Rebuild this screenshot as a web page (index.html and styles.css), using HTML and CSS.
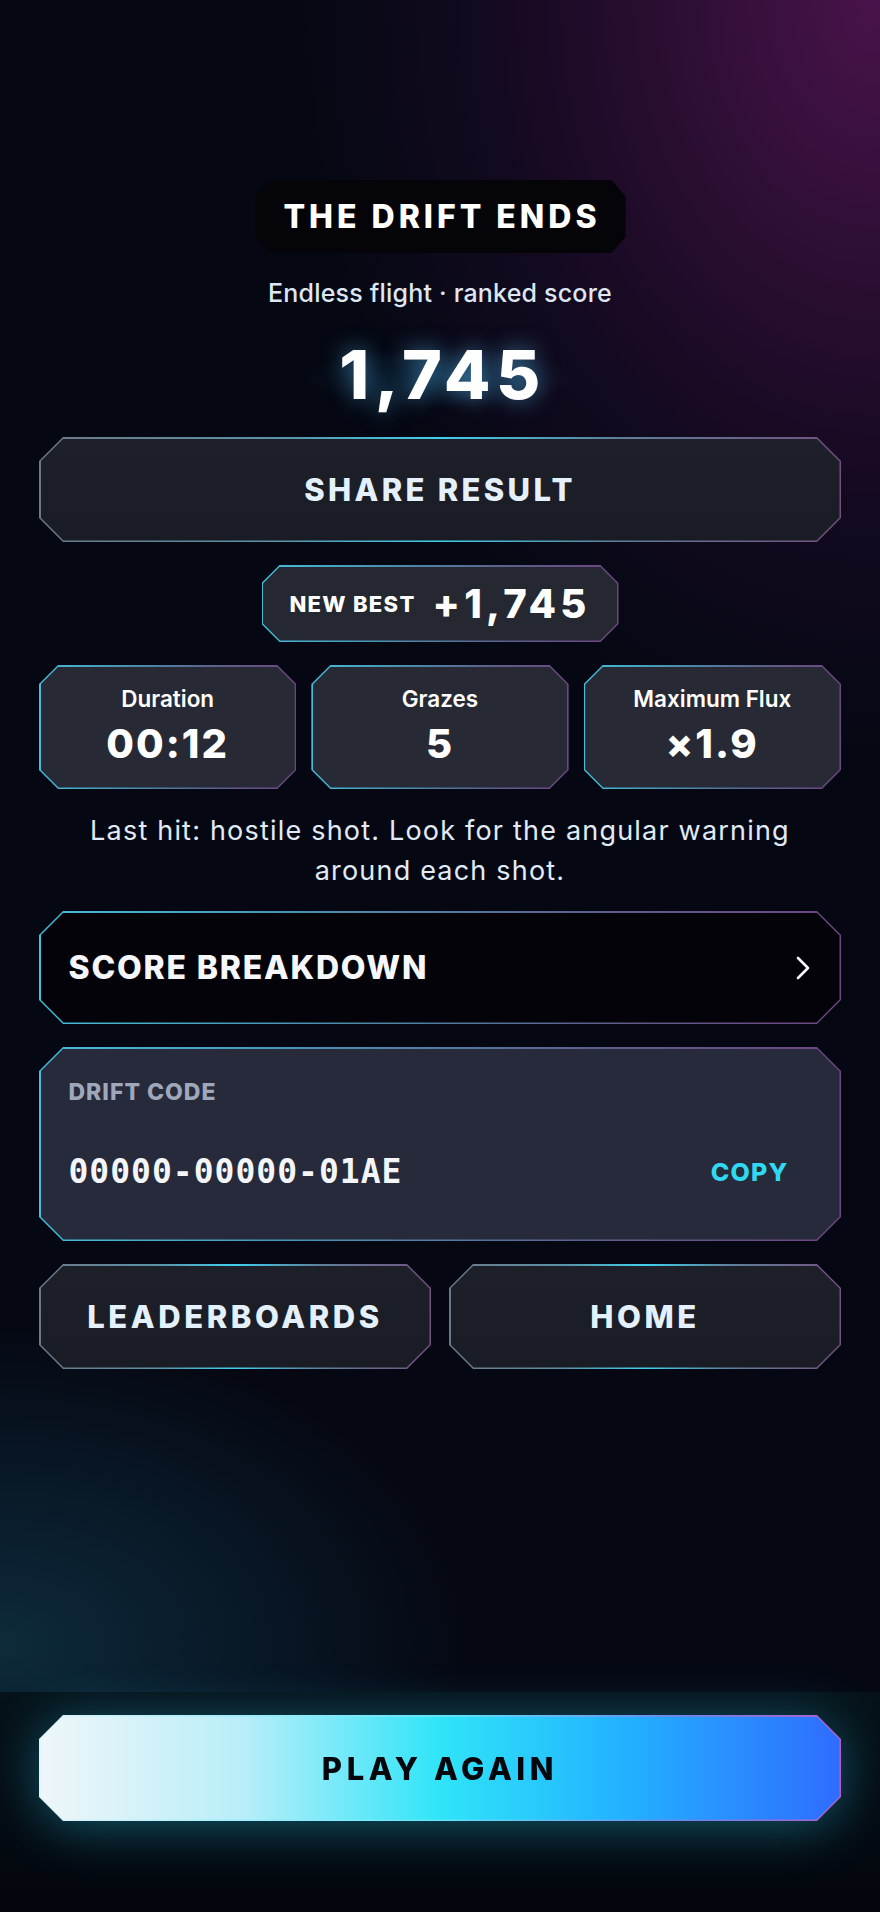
FILE: index.html
```html
<!DOCTYPE html>
<html>
<head>
    <title>The Drift Ends</title>
    <link rel="stylesheet" href="styles.css">
</head>
<body>
    <main class="screen">
        <section class="results">
            <div class="title-plate"><h1>THE DRIFT ENDS</h1></div>
            <p class="mode">Endless flight · ranked score</p>
            <div class="score">1,745</div>

            <button class="frame edge-soft wide-btn">
                <span class="face">SHARE RESULT</span>
            </button>

            <div class="frame edge best">
                <div class="face">
                    <span class="best-label">NEW BEST</span>
                    <span class="best-value">+1,745</span>
                </div>
            </div>

            <div class="stats">
                <div class="frame edge stat">
                    <div class="face">
                        <span class="stat-label">Duration</span>
                        <span class="stat-value">00:12</span>
                    </div>
                </div>
                <div class="frame edge stat">
                    <div class="face">
                        <span class="stat-label">Grazes</span>
                        <span class="stat-value">5</span>
                    </div>
                </div>
                <div class="frame edge stat">
                    <div class="face">
                        <span class="stat-label">Maximum Flux</span>
                        <span class="stat-value">×1.9</span>
                    </div>
                </div>
            </div>

            <p class="hint">Last hit: hostile shot. Look for the angular warning around each shot.</p>

            <button class="frame edge breakdown">
                <span class="face">
                    <span>SCORE BREAKDOWN</span>
                    <svg class="chevron" viewBox="0 0 16 24" width="16" height="24">
                        <path d="M3 2 L13 12 L3 22" fill="none" stroke="#f4f6fa" stroke-width="2.6" stroke-linecap="round" stroke-linejoin="round"/>
                    </svg>
                </span>
            </button>

            <div class="frame edge code-card">
                <div class="face">
                    <span class="code-label">DRIFT CODE</span>
                    <div class="code-row">
                        <span class="code">00000-00000-01AE</span>
                        <button class="copy">COPY</button>
                    </div>
                </div>
            </div>

            <div class="actions">
                <button class="frame edge-soft wide-btn">
                    <span class="face">LEADERBOARDS</span>
                </button>
                <button class="frame edge-soft wide-btn">
                    <span class="face">HOME</span>
                </button>
            </div>
        </section>

        <footer class="dock">
            <div class="play-glow">
                <button class="frame edge-play play">
                    <span class="face">PLAY AGAIN</span>
                </button>
            </div>
        </footer>
    </main>
</body>
</html>
```

FILE: styles.css
```css
* {
    box-sizing: border-box;
}

html, body {
    margin: 0;
    height: 100%;
}

body {
    font-family: 'Inter', 'Roboto', sans-serif;
    color: #e3ecf7;
    background:
        radial-gradient(ellipse 80% 48% at 100% 0%, rgba(80, 20, 80, 0.9), rgba(40, 12, 50, 0.4) 55%, transparent 82%),
        radial-gradient(ellipse 70% 22% at 0% 86%, rgba(14, 48, 66, 0.85), transparent 75%),
        #050813;
}

button {
    font-family: inherit;
    border: none;
    cursor: pointer;
}

.screen {
    min-height: 100vh;
    display: flex;
    flex-direction: column;
}

.results {
    flex: 1;
    display: flex;
    flex-direction: column;
    align-items: stretch;
    padding: 180px 39px 0;
}

/* chamfered shapes: outer ring is the border, inner face is the fill */
.frame {
    --cut: 24px;
    display: block;
    padding: 1.5px;
    clip-path: polygon(var(--cut) 0, calc(100% - var(--cut)) 0, 100% var(--cut), 100% calc(100% - var(--cut)), calc(100% - var(--cut)) 100%, var(--cut) 100%, 0 calc(100% - var(--cut)), 0 var(--cut));
}

.frame > .face {
    --c: calc(var(--cut) - 1px);
    display: flex;
    width: 100%;
    height: 100%;
    clip-path: polygon(var(--c) 0, calc(100% - var(--c)) 0, 100% var(--c), 100% calc(100% - var(--c)), calc(100% - var(--c)) 100%, var(--c) 100%, 0 calc(100% - var(--c)), 0 var(--c));
}

.edge-soft {
    background: linear-gradient(90deg, #6c7886 0%, #5a93a8 30%, #3fd0ee 50%, #5e7f9a 72%, #74507f 100%);
}

.edge {
    background: linear-gradient(90deg, #43bedb 0%, #4a8fb0 35%, #5c5f8a 70%, #6f4580 100%);
}

.edge-play {
    background: linear-gradient(90deg, #e2f4fa 0%, #5fe6f8 50%, #6a86f0 80%, #b060c8 100%);
}

.title-plate {
    align-self: center;
    width: 371px;
    height: 73px;
    display: flex;
    align-items: center;
    justify-content: center;
    background: #050509;
    clip-path: polygon(14px 0, calc(100% - 14px) 0, 100% 16px, 100% calc(100% - 16px), calc(100% - 14px) 100%, 14px 100%, 0 calc(100% - 16px), 0 16px);
}

.title-plate h1 {
    margin: 0 0 0 4px;
    font-size: 32px;
    font-weight: 800;
    letter-spacing: 4px;
    color: #ffffff;
}

.mode {
    margin: 25px 0 0;
    text-align: center;
    font-size: 25px;
    line-height: 30px;
    font-weight: 500;
    letter-spacing: 0.2px;
    color: #dde6f2;
}

.score {
    margin: 32px auto 0;
    width: 360px;
    padding-left: 5px;
    text-align: center;
    font-size: 68px;
    line-height: 68px;
    font-weight: 800;
    letter-spacing: 5.5px;
    color: #ffffff;
    text-shadow: 0 0 22px rgba(90, 200, 255, 0.55);
    background: radial-gradient(ellipse 50% 60% at 50% 55%, rgba(30, 90, 130, 0.35), transparent 75%);
}

.wide-btn {
    height: 105px;
}

.wide-btn > .face {
    align-items: center;
    justify-content: center;
    background: linear-gradient(180deg, #1d1f29, #1a1c25);
    font-size: 31px;
    font-weight: 800;
    letter-spacing: 3.3px;
    color: #e4f0fb;
}

.results > .wide-btn {
    margin-top: 29px;
}

.best {
    --cut: 18px;
    align-self: center;
    width: 357px;
    height: 77px;
    margin-top: 23px;
}

.best > .face {
    align-items: center;
    justify-content: center;
    gap: 17px;
    background: #252731;
    color: #ffffff;
}

.best-label {
    font-size: 22px;
    font-weight: 800;
    letter-spacing: 1.3px;
}

.best-value {
    font-size: 40px;
    font-weight: 800;
    letter-spacing: 4.2px;
}

.stats {
    display: grid;
    grid-template-columns: repeat(3, 1fr);
    gap: 15px;
    margin-top: 23px;
}

.stat {
    --cut: 19px;
    height: 124px;
}

.stat > .face {
    flex-direction: column;
    align-items: center;
    background: #272a35;
    color: #ffffff;
}

.stat-label {
    margin-top: 19px;
    font-size: 22.5px;
    line-height: 26px;
    font-weight: 600;
}

.stat-value {
    margin-top: 9px;
    font-size: 40px;
    line-height: 46px;
    font-weight: 800;
    letter-spacing: 2px;
}

.hint {
    margin: 22px auto 0;
    max-width: 760px;
    text-align: center;
    font-size: 27px;
    line-height: 40px;
    font-weight: 400;
    letter-spacing: 1.2px;
    color: #e1ebf8;
}

.breakdown {
    height: 113px;
    margin-top: 20px;
}

.breakdown > .face {
    align-items: center;
    justify-content: space-between;
    padding: 0 28px 0 28px;
    background: #030309;
    font-size: 32px;
    font-weight: 800;
    letter-spacing: 1.8px;
    color: #f5f7fb;
}

.chevron {
    margin-right: 1px;
}

.code-card {
    height: 194px;
    margin-top: 23px;
}

.code-card > .face {
    flex-direction: column;
    padding: 30px 28px 0;
    background: #262a3a;
}

.code-label {
    font-size: 23px;
    line-height: 26px;
    font-weight: 800;
    letter-spacing: 1px;
    color: #9ea8ba;
}

.code-row {
    display: flex;
    align-items: center;
    justify-content: space-between;
    margin-top: 46px;
}

.code {
    font-family: 'DejaVu Sans Mono', monospace;
    font-size: 33px;
    line-height: 40px;
    font-weight: bold;
    letter-spacing: 1px;
    color: #f3f5f9;
}

.copy {
    background: none;
    padding: 6px 23px 6px 0;
    font-size: 25px;
    font-weight: 800;
    letter-spacing: 1.2px;
    color: #2fd9f2;
}

.actions {
    display: grid;
    grid-template-columns: 1fr 1fr;
    gap: 18px;
    margin-top: 23px;
}

.actions > .wide-btn > .face {
    letter-spacing: 3.6px;
}

.dock {
    height: 220px;
    padding: 23px 39px 0;
    background: linear-gradient(180deg, #061219 0%, #040a11 60%, #03060c 100%);
}

.play-glow {
    filter: drop-shadow(0 6px 26px rgba(30, 180, 215, 0.45));
}

.play {
    width: 100%;
    height: 106px;
}

.play > .face {
    align-items: center;
    justify-content: center;
    background: linear-gradient(90deg, #eef6f9 0%, #b9eef9 25%, #30e4f8 50%, #22b4ff 72%, #2f6cff 100%);
    font-size: 31px;
    font-weight: 800;
    letter-spacing: 4.6px;
    color: #05070d;
}
```
